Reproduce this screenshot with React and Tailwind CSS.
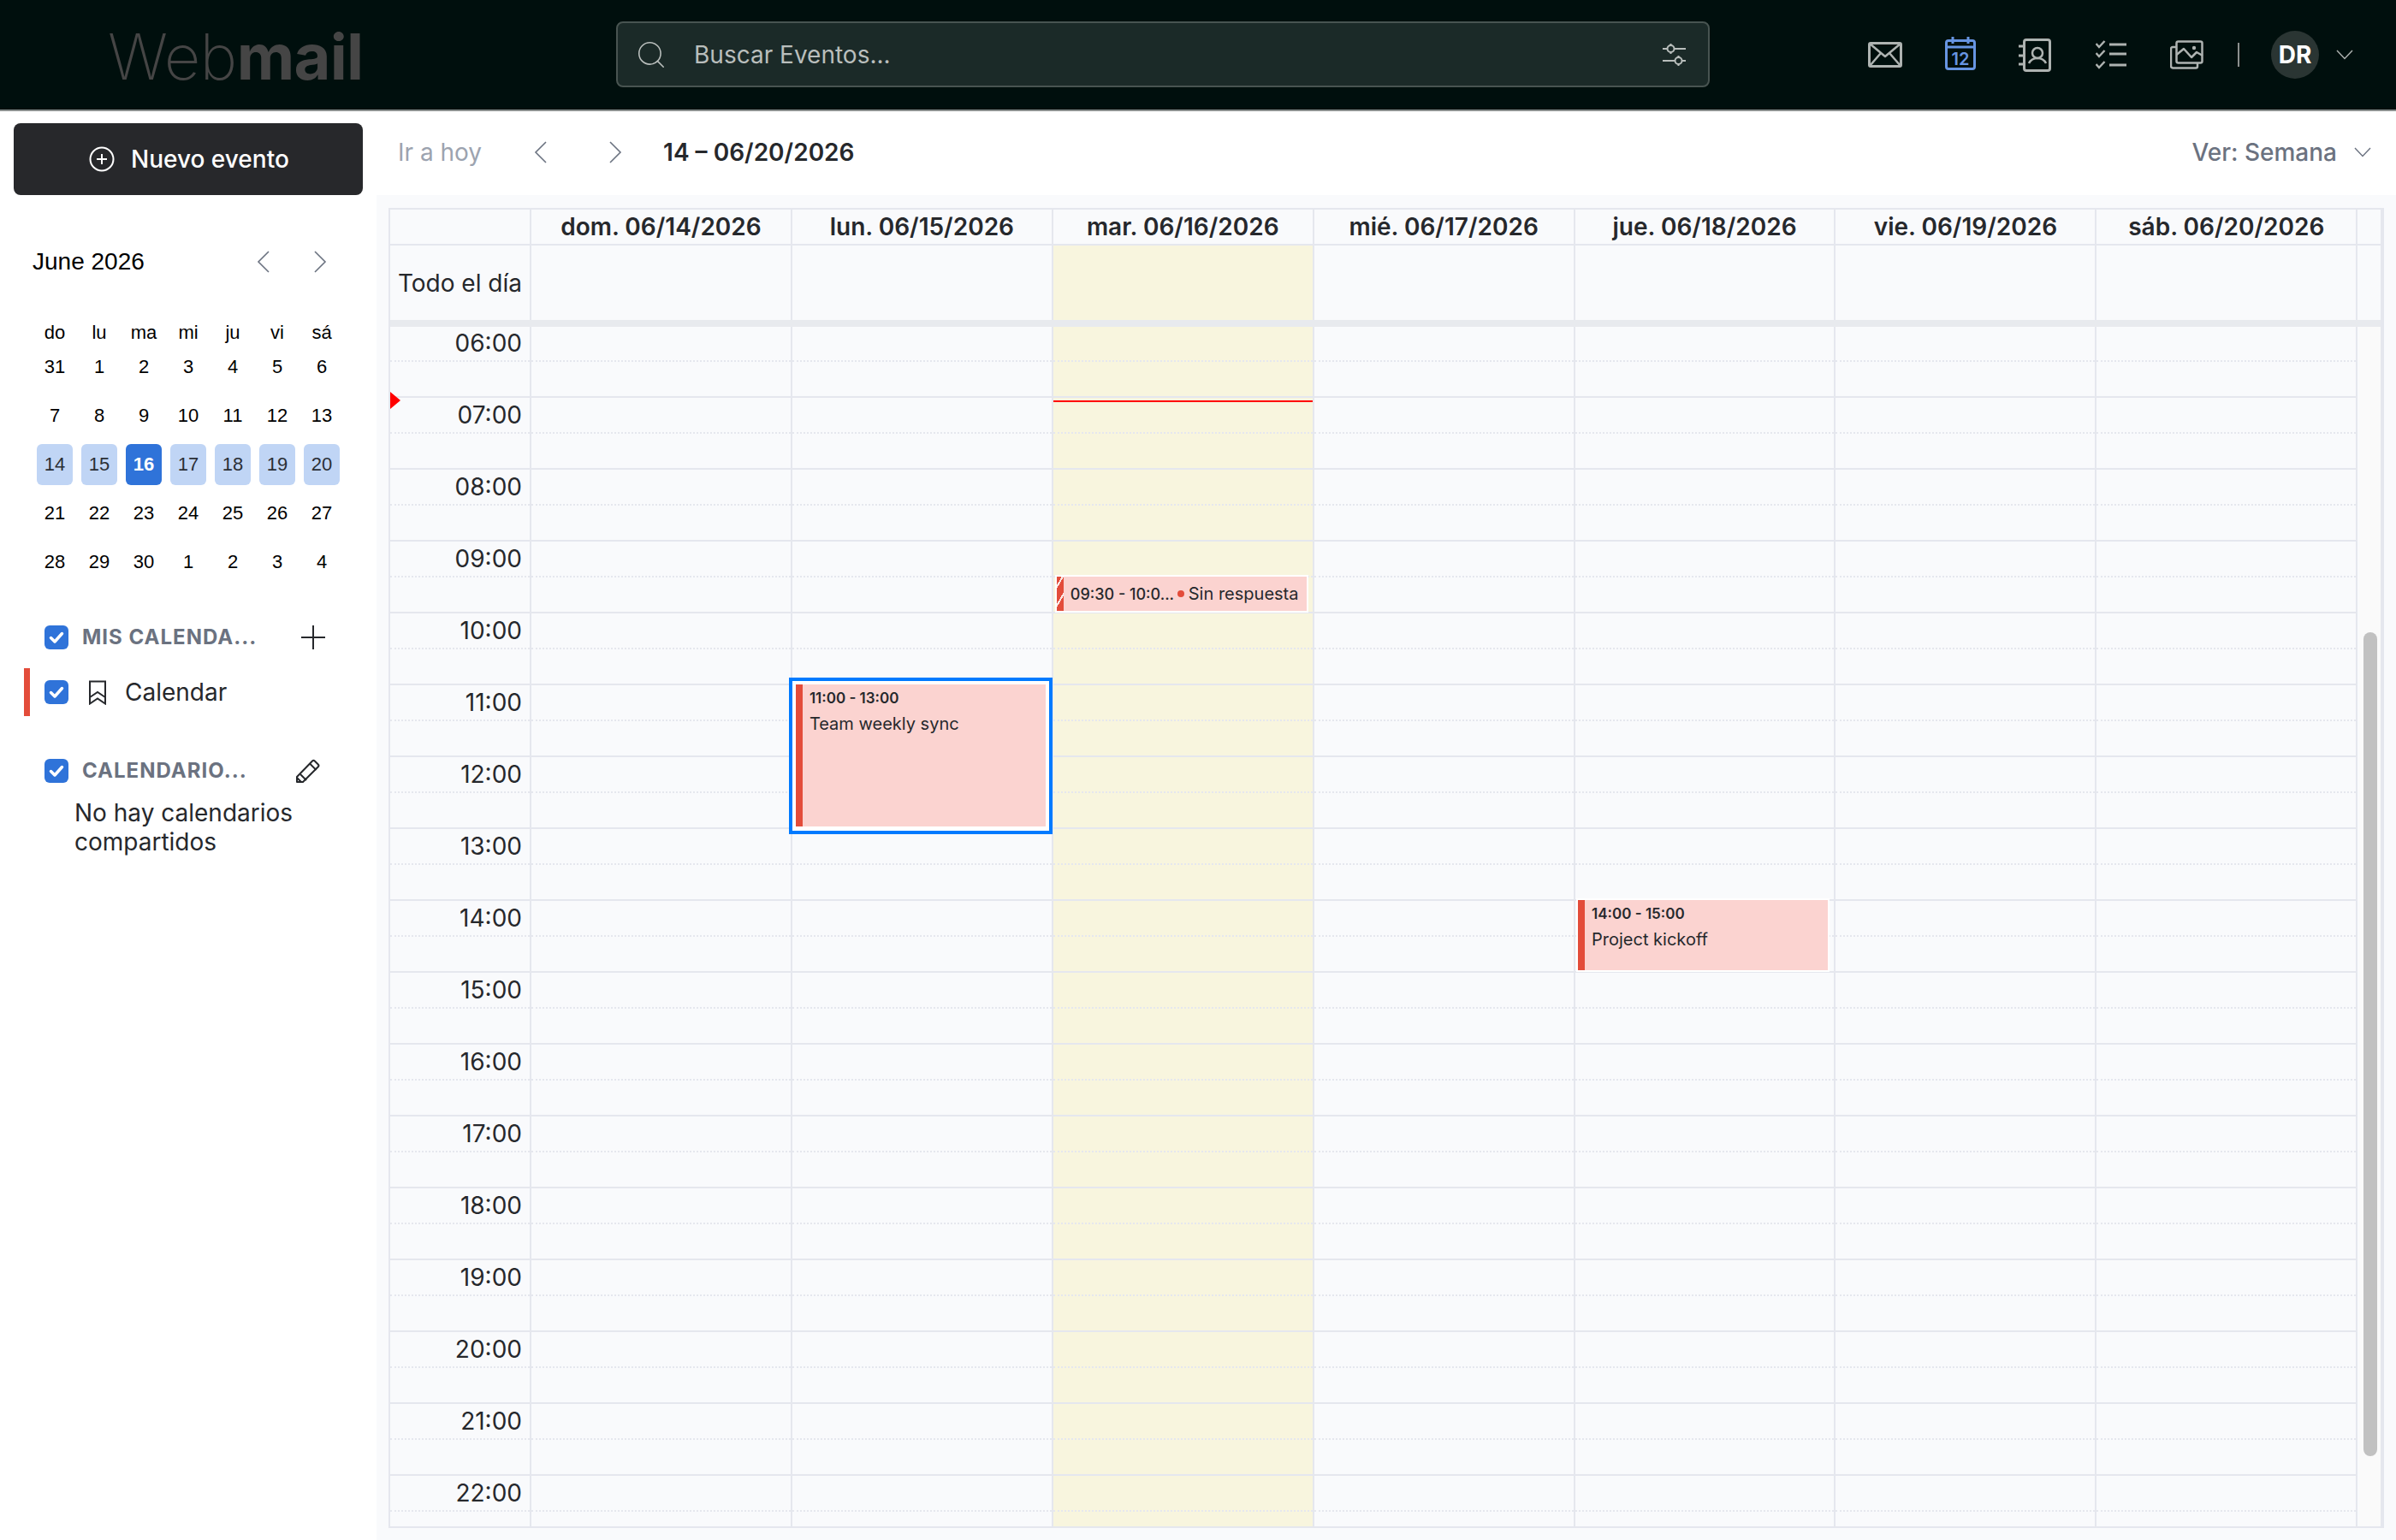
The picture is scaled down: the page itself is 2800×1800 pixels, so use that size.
import { Search } from "lucide-react";

const weekdays = ["do", "lu", "ma", "mi", "ju", "vi", "sá"];
const monthDays = [
    31, 1, 2, 3, 4, 5, 6, 7, 8, 9, 10, 11, 12, 13, 14, 15, 16, 17, 18, 19, 20, 21, 22, 23, 24, 25, 26, 27, 28, 29, 30, 1, 2, 3, 4,
];
const weekHeaders = [
    "dom. 06/14/2026",
    "lun. 06/15/2026",
    "mar. 06/16/2026",
    "mié. 06/17/2026",
    "jue. 06/18/2026",
    "vie. 06/19/2026",
    "sáb. 06/20/2026",
];
const hours = ["06", "07", "08", "09", "10", "11", "12", "13", "14", "15", "16", "17", "18", "19", "20", "21", "22"];

const ChevronSide = ({ left, className }) => (
    <svg width="15" height="26" viewBox="0 0 15 26" fill="none" stroke="currentColor" strokeWidth="1.6" className={className}>
        <path d={left ? "M14 1 2 13l12 12" : "M1 1l12 12L1 25"} />
    </svg>
);

const ChevronDownThin = ({ className }) => (
    <svg width="20" height="12" viewBox="0 0 20 12" fill="none" stroke="currentColor" strokeWidth="1.4" className={className}>
        <path d="M1 1l9 9.500L19 1" />
    </svg>
);

const MailIcon = () => (
    <svg width="40" height="30" viewBox="0 0 40 30" fill="none" stroke="#aeb3b1" strokeWidth="3" strokeLinejoin="round">
        <rect x="1.500" y="1.500" width="37" height="27" rx="1.500" />
        <path d="M2 2 20 17 38 2M2 28 15 13M38 28 25 13" strokeWidth="2.500" />
    </svg>
);

const CalendarIcon = () => (
    <svg width="36" height="39" viewBox="0 0 36 39" fill="none" stroke="#6795e2" strokeWidth="3" className="-mt-[3px]">
        <rect x="1.500" y="4.500" width="33" height="33" rx="2.500" />
        <path d="M1.500 12h33M9 0v8M27 0v8" />
        <text x="18" y="33" textAnchor="middle" fill="#6795e2" stroke="none" fontSize="20" fontWeight="600" fontFamily="Inter">12</text>
    </svg>
);

const ContactsIcon = () => (
    <svg width="38" height="39" viewBox="0 0 38 39" fill="none" stroke="#aeb3b1" strokeWidth="3">
        <rect x="6.500" y="1.500" width="30" height="36" rx="2.500" />
        <path d="M0 9h7M0 20h7M0 30h7" />
        <circle cx="22" cy="17" r="6" strokeWidth="2.500" />
        <path d="M12 29c2-4 5.500-6 10-6s8 2 10 6" strokeWidth="2.500" />
    </svg>
);

const TasksIcon = () => (
    <svg width="36" height="34" viewBox="0 0 36 34" fill="none" stroke="#aeb3b1" strokeWidth="3">
        <path d="M0.500 4 4 8 10.500 1M0.500 15 4 19 10.500 12M0.500 28 4 32 10.500 25" strokeWidth="2.500" />
        <path d="M16 5h20M16 16h20M16 29h20" />
    </svg>
);

const GalleryIcon = () => (
    <svg width="39" height="34" viewBox="0 0 39 34" fill="none" stroke="#aeb3b1" strokeWidth="2.500" strokeLinejoin="round">
        <rect x="7.500" y="1.500" width="30" height="25" rx="2" />
        <path d="M7.500 8H3a2 2 0 0 0-2 2v20a2.500 2.500 0 0 0 2.500 2.500H30a2 2 0 0 0 2-2v-4" />
        <path d="M7.500 17 16 10l9 10 6-6 7 4" />
        <circle cx="28" cy="9" r="2.200" fill="#aeb3b1" stroke="none" />
    </svg>
);

const FilterIcon = () => (
    <svg width="28" height="26" viewBox="0 0 28 26" fill="none" stroke="#b9bebc" strokeWidth="2">
        <path d="M0 6h5M14 6h13M0 20h14M23 20h4" />
        <circle cx="9.500" cy="6" r="4" />
        <circle cx="18.500" cy="20" r="4" />
        <path d="M9.500 0v2M9.500 10v2M18.500 14v2M18.500 24v2" />
    </svg>
);

const BookmarkIcon = () => (
    <svg width="22" height="29" viewBox="0 0 22 29" fill="none" stroke="#26282c" strokeWidth="2">
        <path d="M2 1.500h18v26l-9-6-9 6z" />
        <path d="M2 20l9-6 9 6" />
    </svg>
);

const PencilIcon = () => (
    <svg width="30" height="30" viewBox="0 0 30 30" fill="none" stroke="#26282c" strokeWidth="2" strokeLinejoin="round">
        <path d="M2 22 20 3.500a2 2 0 0 1 2.800 0l4 4a2 2 0 0 1 0 2.800L9 28H2z" />
        <path d="M17 6.500 24.500 14M6 19l7 7M2 23l5 5" />
    </svg>
);

const PlusIcon = () => (
    <svg width="28" height="28" viewBox="0 0 28 28" fill="none" stroke="#26282c" strokeWidth="2">
        <path d="M14 0v28M0 14h28" />
    </svg>
);

const CheckBox = () => (
    <div className="flex h-7 w-7 shrink-0 items-center justify-center rounded-md bg-[#2f73d9]">
        <svg width="20" height="20" viewBox="0 0 20 20" fill="none" stroke="#fff" strokeWidth="3.500" strokeLinecap="round" strokeLinejoin="round">
            <path d="M3.500 10.500 8 15 16.500 5.500" />
        </svg>
    </div>
);

const TopBar = () => (
    <header className="flex h-[130px] items-start border-b-2 border-[#8b8f8e] bg-[#000f0d] font-['Inter',sans-serif]">
        <div className="flex h-[128px] w-[720px] shrink-0 items-center pl-[126px] pt-[3px] text-[74px] leading-none tracking-[-0.7px] text-[#454545]">
            <span className="font-extralight">Web</span>
            <span className="font-bold">mail</span>
        </div>
        <div className="mt-[25px] flex h-[77px] w-[1278px] shrink-0 items-center rounded-lg border-2 border-[#485451] bg-[#1b2a28] pl-[20px] pr-[25px] text-[#b9bebc]">
            <Search size={38} strokeWidth={1} className="shrink-0" />
            <span className="ml-[31px] flex-1 text-[28px]">Buscar Eventos...</span>
            <FilterIcon />
        </div>
        <div className="flex h-[128px] flex-1 items-center pl-[185px]">
            <div className="w-[90px]"><MailIcon /></div>
            <div className="w-[86px]"><CalendarIcon /></div>
            <div className="w-[90px]"><ContactsIcon /></div>
            <div className="w-[87px]"><TasksIcon /></div>
            <div className="w-[79px]"><GalleryIcon /></div>
            <div className="h-[28px] w-[2px] bg-[#8b8f8e]" />
            <div className="ml-[37px] flex h-[56px] w-[56px] items-center justify-center rounded-full bg-[#2a3533] text-[28px] font-bold text-white">DR</div>
            <ChevronDownThin className="ml-[20px] text-[#aeb3b1]" />
        </div>
    </header>
);

const MiniCalendar = () => (
    <div className="font-['Liberation_Sans',sans-serif] text-[22px] text-black">
        <div className="flex h-[40px] items-center pl-[38px] text-[28px]">
            <span className="w-[262px]">June 2026</span>
            <ChevronSide left className="text-[#6b7280]" />
            <ChevronSide className="ml-[52px] text-[#6b7280]" />
        </div>
        <div className="mt-[46px] grid grid-cols-[repeat(7,42px)] gap-x-[10px] pl-[43px]">
            {weekdays.map((d) => (
                <div key={d} className="flex h-[32px] items-center justify-center">{d}</div>
            ))}
        </div>
        <div className="mt-[1px] grid grid-cols-[repeat(7,42px)] grid-rows-[repeat(5,48px)] gap-x-[10px] gap-y-[9px] pl-[43px]">
            {monthDays.map((d, i) => {
                let cls = "flex items-center justify-center rounded-md pb-[1px]";
                if (i >= 14 && i <= 20) cls += i === 16 ? " bg-[#2f73d9] font-bold text-white" : " bg-[#c0d5f5] text-[#2b2f36]";
                return <div key={i} className={cls}>{d}</div>;
            })}
        </div>
    </div>
);

const Sidebar = () => (
    <aside className="w-[440px] shrink-0 bg-white">
        <div className="flex h-[98px] items-end px-[16px] font-['Inter',sans-serif]">
            <button className="flex h-[84px] w-full items-center justify-start gap-[19px] rounded-lg bg-[#27282b] pl-[88px] text-[28px] font-medium text-white">
                <svg width="30" height="30" viewBox="0 0 30 30" fill="none" stroke="#fff" strokeWidth="2">
                    <circle cx="15" cy="15" r="13.500" />
                    <path d="M15 9v12M9 15h12" />
                </svg>
                Nuevo evento
            </button>
        </div>
        <div className="mt-[58px]"><MiniCalendar /></div>
        <div className="mt-[50px] font-['Inter',sans-serif] text-[#26282c]">
            <div className="flex h-[28px] items-center pl-[52px]">
                <CheckBox />
                <span className="ml-[16px] w-[256px] text-[24px] font-bold tracking-[1px] text-[#6b7280]">MIS CALENDA...</span>
                <PlusIcon />
            </div>
            <div className="ml-[28px] mt-[22px] flex h-[56px] items-center border-l-[7px] border-[#e34c3a] pl-[17px]">
                <CheckBox />
                <span className="ml-[23px]"><BookmarkIcon /></span>
                <span className="ml-[21px] text-[28px]">Calendar</span>
            </div>
            <div className="mt-[50px] flex h-[28px] items-center pl-[52px]">
                <CheckBox />
                <span className="ml-[16px] w-[249px] text-[24px] font-bold tracking-[1px] text-[#6b7280]">CALENDARIO...</span>
                <PencilIcon />
            </div>
            <p className="mt-[18px] pl-[87px] text-[28px] leading-[34px]">
                No hay calendarios
                <br />
                compartidos
            </p>
        </div>
    </aside>
);

const Toolbar = () => (
    <div className="flex h-[98px] items-center bg-white pb-[3px] pl-[25px] pr-[29px] font-['Inter',sans-serif] text-[28px]">
        <span className="text-[#9ca3af]">Ir a hoy</span>
        <ChevronSide left className="ml-[61px] text-[#6b7280]" />
        <ChevronSide className="ml-[73px] text-[#6b7280]" />
        <span className="ml-[48px] flex-1 font-semibold text-[#26282c]">14 – 06/20/2026</span>
        <span className="font-medium text-[#6b7280]">Ver: Semana</span>
        <ChevronDownThin className="ml-[20px] text-[#6b7280]" />
    </div>
);

const EventCard = ({ className, time, title }) => (
    <div className={`absolute flex border-[2px] border-white bg-[#fbd3d0] ${className}`}>
        <div className="w-[8px] shrink-0 bg-[#e34c3a]" />
        <div className="pl-[8px] pt-[2px] text-[20px] leading-[29px] text-[#26282c]">
            <div className="text-[17px] font-semibold">{time}</div>
            <div className="mt-[1px]">{title}</div>
        </div>
    </div>
);

const DayColumn = ({ index }) => (
    <div className={`relative w-[304.9px] shrink-0 border-r-2 border-[#e5e7ee] ${index === 2 ? "bg-[#f8f5de]" : ""}`}>
        {hours.map((h) => (
            <div key={h} className="h-[84px] border-b-2 border-[#e5e7ee]">
                <div className="h-[42px] border-b-2 border-dotted border-[#e5e7ee]" />
            </div>
        ))}
        {index === 1 && (
            <>
                <div className="absolute left-[-4px] top-[411px] h-[183px] w-[308px] border-[4px] border-[#007aff] bg-white" />
                <EventCard className="left-[2px] top-[417px] h-[170px] w-[296px]" time="11:00 - 13:00" title="Team weekly sync" />
            </>
        )}
        {index === 2 && (
            <>
                <div className="absolute left-0 right-0 top-[87px] h-[2px] bg-[#ff0000]" />
                <div className="absolute left-[2px] top-[291px] flex h-[44px] w-[296px] items-center whitespace-nowrap border-[2px] border-white bg-[#fbd3d0] text-[20px] text-[#26282c]">
                    <div className="h-full w-[8px] shrink-0 bg-[repeating-linear-gradient(-60deg,#e34c3a_0px,#e34c3a_9px,#fbe9e6_9px,#fbe9e6_11px)]" />
                    <span className="ml-[8px] w-[119px] shrink-0 text-[18px] font-medium">09:30 - 10:0...</span>
                    <span className="ml-[6px] h-[8px] w-[8px] shrink-0 rounded-full bg-[#e34c3a]" />
                    <span className="ml-[5px]">Sin respuesta</span>
                </div>
            </>
        )}
        {index === 4 && (
            <EventCard className="left-[1.500px] top-[669px] h-[86px] w-[296px]" time="14:00 - 15:00" title="Project kickoff" />
        )}
    </div>
);

const WeekGrid = () => (
    <div className="mx-[14px] mt-[15px] flex h-[1543px] flex-col overflow-hidden border-[2px] border-r-[4px] border-[#e5e7ee] font-['Inter',sans-serif] text-[#26282c]">
        {/* Header */}
        <div className="flex h-[42px] shrink-0 border-b-2 border-[#e5e7ee]">
            <div className="w-[165px] shrink-0 border-r-2 border-[#e5e7ee]" />
            {weekHeaders.map((d) => (
                <div key={d} className="flex w-[304.9px] shrink-0 items-center justify-center border-r-2 border-[#e5e7ee] text-[28px] font-semibold">
                    {d}
                </div>
            ))}
        </div>

        {/* All day */}
        <div className="flex h-[87px] shrink-0">
            <div className="flex w-[165px] shrink-0 items-center justify-end border-r-2 border-[#e5e7ee] pr-[9px] pt-[1px] text-[28px]">Todo el día</div>
            {weekHeaders.map((d, i) => (
                <div key={d} className={`w-[304.9px] shrink-0 border-r-2 border-[#e5e7ee] ${i === 2 ? "bg-[#f8f5de]" : ""}`} />
            ))}
        </div>
        <div className="h-[8px] shrink-0 bg-[#e8eaee]" />

        {/* Hours */}
        <div className="relative flex flex-1 overflow-hidden">
            <div className="-mt-[1px] flex">
                <div className="relative w-[165px] shrink-0 border-r-2 border-[#e5e7ee]">
                    {hours.map((h) => (
                        <div key={h} className="relative h-[84px] border-b-2 border-[#e5e7ee]">
                            <div className="h-[42px] border-b-2 border-dotted border-[#e5e7ee]" />
                            <span className="absolute right-[9px] top-0 text-[28px] leading-[40px]">{h}:00</span>
                        </div>
                    ))}
                    <div className="absolute left-0 top-[77px] h-0 w-0 border-y-[10px] border-l-[12px] border-y-transparent border-l-[#ff0000]" />
                </div>
                {weekHeaders.map((d, i) => (
                    <DayColumn key={d} index={i} />
                ))}
            </div>
            <div className="relative ml-auto w-[25px] shrink-0 bg-[#fafafa]">
                <div className="absolute left-[5px] top-[357px] h-[963px] w-[16px] rounded-lg bg-[#c1c1c1]" />
            </div>
        </div>
    </div>
);

const App = () => (
    <div className="flex h-[1800px] w-[2800px] flex-col overflow-hidden bg-white">
        <TopBar />
        <div className="flex flex-1">
            <Sidebar />
            <main className="flex-1 bg-[#f9fafc]">
                <Toolbar />
                <WeekGrid />
            </main>
        </div>
    </div>
);

export default App;
